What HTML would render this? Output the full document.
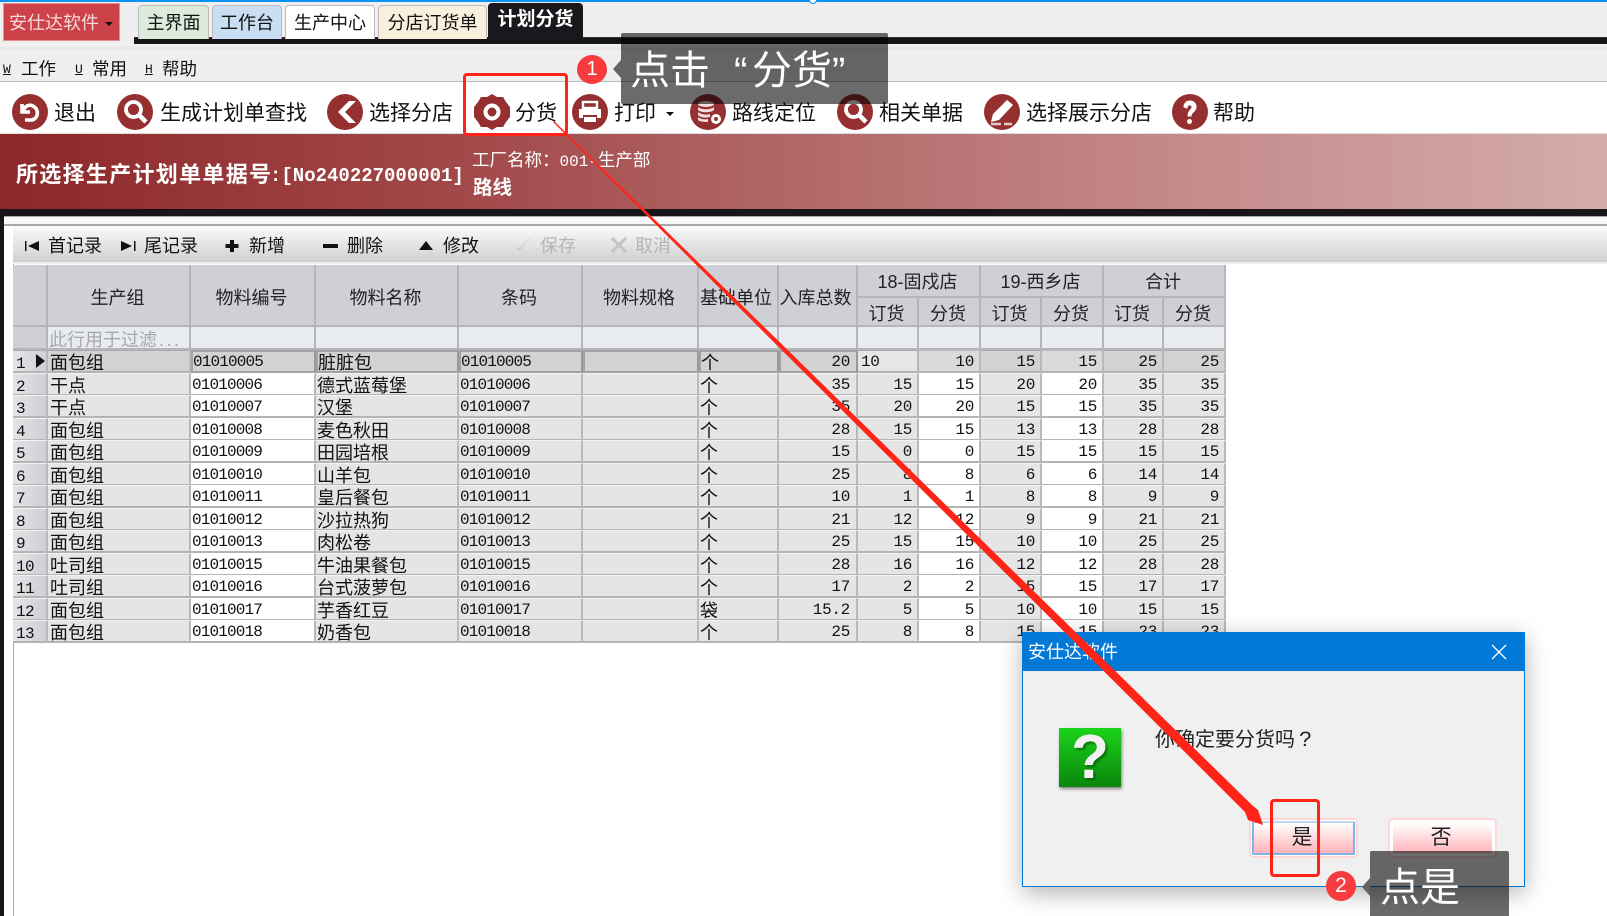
<!DOCTYPE html>
<html lang="zh"><head><meta charset="utf-8"><title>计划分货</title>
<style>
html,body{margin:0;padding:0}
body{width:1607px;height:916px;position:relative;overflow:hidden;background:#fff;font-family:"Liberation Sans","WenQuanYi Zen Hei","Noto Sans CJK SC",sans-serif;color:#111}
div,span,svg{position:absolute;box-sizing:border-box}
.t{white-space:nowrap;line-height:1}
.tab{top:5px;height:34px;border:1px solid #bbb;border-bottom:0;border-radius:4px 4px 0 0;font-size:18px;line-height:35px;text-align:center;white-space:nowrap}
.m{font-size:17.5px;top:61px}
.k{font:13px "Liberation Mono",monospace;top:62px;text-decoration:underline}
.b{font-size:21px;top:103px}
.ic{top:94px;width:36px;height:36px}
.g{font-size:18px;top:237px}
.h{top:265px;height:62px;background:#ced0d5;border-right:2px solid #b4b6ba;border-bottom:2px solid #b4b6ba;font-size:18px;text-align:center;line-height:67px;padding-right:2px;color:#222;white-space:nowrap}
.h2{height:33px;line-height:34px}
.h3{top:298px;height:29px;line-height:32px}
.f{top:327px;height:23px;background:#e8ebf0;border-right:2px solid #b4b6ba;border-bottom:2px solid #b4b6ba}
.r{left:13px;width:1213px;height:23px}
.r span{top:0;height:23px;background:#e5e5e5;border-right:2px solid #b9b9b9;border-bottom:2px solid #b4b4b4;border-top:1px solid #f3f3f3;line-height:24px;white-space:nowrap;font-size:18px;padding-left:3px;overflow:hidden}
.r .n{left:0;width:35px;background:linear-gradient(90deg,#e4e4e6,#cdd0d6);font:16px/26px "Liberation Mono",monospace;letter-spacing:-.6px;padding-left:3px}
.r .a{left:35px;width:143px;padding-left:2px}
.r .c{left:178px;width:125px;background:#fff;font:16px/23px "Liberation Mono",monospace;letter-spacing:-.85px;border-top-color:#fff;padding-left:1px}
.r .d{left:303px;width:143px;padding-left:1px}
.r .e{left:446px;width:124px;font:16px/23px "Liberation Mono",monospace;letter-spacing:-.85px;padding-left:1px}
.r .s{left:570px;width:116px}
.r .u{left:686px;width:80px;padding-left:1px}
.r .q,.r .o1,.r .o2,.r .o3,.r .o4,.r .o5,.r .o6{font:16px/23px "Liberation Mono",monospace;letter-spacing:-.3px;text-align:right;padding:0 5px 0 0}
.r .q{left:766px;width:79px;padding-right:6px}
.r .o1{left:845px;width:61px}
.r .o2{left:906px;width:62px;background:#fff;border-top-color:#fff}
.r .o3{left:968px;width:61px}
.r .o4{left:1029px;width:62px;background:#fff;border-top-color:#fff}
.r .o5{left:1091px;width:60px}
.r .o6{left:1151px;width:62px}
.sel span{background:#d2d2d2;border-top:1px solid #aaa}
.sel .n{background:linear-gradient(90deg,#e4e4e6,#cdd0d6)}
.r.sel .c,.r.sel .d,.r.sel .e,.sel .s,.r.sel .u,.r.sel .q{background:#d2d2d2;border:2px solid #a2a2a2;border-right:2px solid #999;line-height:21px;padding-left:0}
.r.sel .d,.r.sel .u{line-height:22px}
.r.sel .q{padding-right:6px}
.r.sel .o2,.r.sel .o4{background:#dadada;border-top-color:#bbb}
.r.sel .o1{background:#e6e6e6;text-align:left;padding-left:3px}
.rb{border:3px solid #ff2418;border-radius:4px}
.tip{background:rgba(0,0,0,.58)}
.ar{width:0;height:0;border-top:9px solid transparent;border-bottom:9px solid transparent;border-right:8px solid #646464}
.bd{border-radius:50%;background:#f73b3f;color:#fff;text-align:center;font-family:"Liberation Sans",sans-serif}
.btn{border-radius:2px;background:linear-gradient(#fff,#ffb4b9);font-size:21px;text-align:center;line-height:29px;padding-right:3px;color:#222;box-shadow:0 0 0 1px #fff,0 0 0 3px #ffd6d8}
</style></head><body>
<!-- top -->
<div style="left:0;top:0;width:1607px;height:82px;background:#efefef"></div>
<div style="left:0;top:0;width:1607px;height:2px;background:#0a93f5"></div>
<div style="left:809px;top:-4px;width:8px;height:8px;border:1.5px solid #0a93f5;border-radius:50%;background:#fff"></div>
<div style="left:3px;top:3px;width:117px;height:38px;background:#cc4248;border:1px solid #e58f90"></div>
<div class="t" style="left:9px;top:14px;font-size:18px;color:#f7dada">安仕达软件</div>
<div style="left:105px;top:22px;width:0;height:0;border:4px solid transparent;border-top:4px solid #111"></div>
<div style="left:134px;top:37px;width:1473px;height:7px;background:#17151a;border-top:1px solid #333"></div>
<div style="left:0;top:44px;width:1607px;height:6px;background:linear-gradient(#f3f3f3,#e4e4e4)"></div>
<div class="tab" style="left:138px;width:71px;background:#dcebdc">主界面</div>
<div class="tab" style="left:212px;width:70px;background:#c9ddf3">工作台</div>
<div class="tab" style="left:285px;width:90px;background:#fff">生产中心</div>
<div class="tab" style="left:378px;width:109px;background:#f8efdc">分店订货单</div>
<div class="tab" style="left:488px;top:3px;width:95px;height:36px;background:#1a181d;border:0;color:#fff;font-weight:bold;font-size:19px;line-height:33px">计划分货</div>
<!-- menu -->
<div class="k" style="left:3px">W</div><div class="t m" style="left:21px">工作</div>
<div class="k" style="left:75px">U</div><div class="t m" style="left:92px">常用</div>
<div class="k" style="left:145px">H</div><div class="t m" style="left:162px">帮助</div>
<!-- toolbar -->
<div style="left:0;top:81px;width:1607px;height:53px;background:#fff;border-top:1px solid #b9b9b9;border-bottom:1px solid #ddd"></div>

<svg class="ic" style="left:12px" viewBox="0 0 36 36"><circle cx="18" cy="18" r="18" fill="#963030"/><path d="M10 10v8h8M11 17c2-5 6-7 10-5 6 3 6 12-1 14h-7" fill="none" stroke="#fff" stroke-width="3.6"/></svg>
<div class="t b" style="left:54px">退出</div>
<svg class="ic" style="left:117px" viewBox="0 0 36 36"><circle cx="18" cy="18" r="18" fill="#963030"/><circle cx="16.500" cy="15.500" r="7.500" fill="none" stroke="#fff" stroke-width="3.800"/><path d="M22 21l7 7" stroke="#fff" stroke-width="4.500"/></svg>
<div class="t b" style="left:160px">生成计划单查找</div>
<svg class="ic" style="left:327px" viewBox="0 0 36 36"><circle cx="18" cy="18" r="18" fill="#963030"/><path d="M22 7L11 18l11 11h7L18 18 29 7z" fill="#fff"/></svg>
<div class="t b" style="left:369px">选择分店</div>
<svg class="ic" style="left:474px" viewBox="0 0 36 36"><path d="M18 0l5 3 6 0 3 5 4 5v10l-4 5-3 5-6 0-5 3-5-3-6 0-3-5-4-5V13l4-5 3-5 6 0z" fill="#963030"/><circle cx="18" cy="18" r="6.500" fill="none" stroke="#fff" stroke-width="4"/></svg>
<div class="t b" style="left:515px">分货</div>
<svg class="ic" style="left:572px" viewBox="0 0 36 36"><circle cx="18" cy="18" r="18" fill="#963030"/><rect x="11" y="8" width="14" height="6" fill="none" stroke="#fff" stroke-width="2.400"/><path d="M7 15h22v9h-4v-3H11v3H7z" fill="#fff"/><rect x="12" y="23" width="12" height="5" fill="#fff"/></svg>
<div class="t b" style="left:614px">打印</div>
<div style="left:666px;top:112px;width:0;height:0;border:4px solid transparent;border-top:4px solid #111"></div>
<svg class="ic" style="left:690px" viewBox="0 0 36 36"><circle cx="18" cy="18" r="18" fill="#963030"/><ellipse cx="16" cy="10" rx="8" ry="3" fill="#f2dede"/><path d="M8 13c3 3 13 3 16 0v3c-3 3-13 3-16 0zM8 18c3 3 10 3 12 2v3c-3 1-9 1-12-2zM8 23c2 2 7 3 10 2v3c-3 0-8 0-10-2z" fill="#f2dede"/><circle cx="26" cy="25" r="5" fill="#fff"/><circle cx="26" cy="25" r="2" fill="#963030"/></svg>
<div class="t b" style="left:732px">路线定位</div>
<svg class="ic" style="left:837px" viewBox="0 0 36 36"><circle cx="18" cy="18" r="18" fill="#963030"/><circle cx="16.500" cy="15.500" r="7.500" fill="none" stroke="#fff" stroke-width="3.800"/><path d="M22 21l7 7" stroke="#fff" stroke-width="4.500"/></svg>
<div class="t b" style="left:879px">相关单据</div>
<svg class="ic" style="left:984px" viewBox="0 0 36 36"><circle cx="18" cy="18" r="18" fill="#963030"/><path d="M23 6l6 5-14 15-8 2 2-8z" fill="#fff"/><path d="M7 30h10M20 30h8" stroke="#e9c9c9" stroke-width="2.400"/></svg>
<div class="t b" style="left:1026px">选择展示分店</div>
<svg class="ic" style="left:1172px" viewBox="0 0 36 36"><circle cx="18" cy="18" r="18" fill="#963030"/><path d="M12 13c0-8 12-8 12 0 0 5-5 5-5 9h-3c0-6 4-6 4-9 0-3-5-3-5 1z" fill="#fff" stroke="#fff"/><circle cx="17.500" cy="27.500" r="2.500" fill="#fff"/></svg>
<div class="t b" style="left:1213px">帮助</div>

<!-- banner -->
<div style="left:0;top:134px;width:1607px;height:75px;background:linear-gradient(90deg,#8d2729 0%,#a34a4b 30%,#b26868 50%,#c68c8c 75%,#d4abab 100%)"></div>
<div class="t" style="left:16px;top:164px;font-size:22px;font-weight:bold;color:#fff;letter-spacing:1.3px">所选择生产计划单单据号</div>
<div class="t" style="left:270px;top:165px;font:bold 19px 'Liberation Mono',monospace;color:#fff">:[No240227000001]</div>
<div class="t" style="left:472px;top:152px;font-size:17.500px;color:#fff">工厂名称：<span style="position:static;font-family:'Liberation Mono',monospace;font-size:16px">001-</span>生产部</div>
<div class="t" style="left:473px;top:179px;font-size:19.500px;font-weight:bold;color:#fff">路线</div>
<div style="left:0;top:209px;width:1607px;height:7px;background:#17151a"></div>
<div style="left:0;top:216px;width:4px;height:700px;background:#17151a"></div>
<div style="left:4px;top:216px;width:1603px;height:10px;background:#f9f9f9;border-top:1px solid #aaa;border-bottom:2px solid #a8a8a8"></div>
<div style="left:13px;top:226px;width:1px;height:690px;background:#aaa"></div>

<!-- grid toolbar -->
<div style="left:13px;top:226px;width:1594px;height:38px;background:linear-gradient(#fafafa,#d0d0d0);border-bottom:2px solid #eee"></div>
<svg style="left:24px;top:240px;width:16px;height:12px" viewBox="0 0 16 12"><path d="M1 1v10h1.500V1zM15 1v10L4 6z" fill="#111"/></svg>
<div class="t g" style="left:48px">首记录</div>
<svg style="left:120px;top:240px;width:16px;height:12px" viewBox="0 0 16 12"><path d="M1 1v10l11-5zM14 1v10h1.500V1z" fill="#111"/></svg>
<div class="t g" style="left:144px">尾记录</div>
<svg style="left:225px;top:239px;width:14px;height:14px" viewBox="0 0 14 14"><path d="M5 1h4v4h4.500v4H9v4H5V9H.5V5H5z" fill="#111"/></svg>
<div class="t g" style="left:249px">新增</div>
<div style="left:323px;top:244px;width:15px;height:4px;background:#111"></div>
<div class="t g" style="left:347px">删除</div>
<div style="left:419px;top:241px;width:0;height:0;border:7.500px solid transparent;border-top:0;border-bottom:9px solid #111"></div>
<div class="t g" style="left:443px">修改</div>
<svg style="left:513px;top:237px;width:18px;height:16px" viewBox="0 0 18 16"><path d="M1 9l5 6L17 1 6 11z" fill="#c8c8c8" stroke="#ddd"/></svg>
<div class="t g" style="left:540px;color:#b5b5b5">保存</div>
<svg style="left:610px;top:237px;width:18px;height:16px" viewBox="0 0 18 16"><path d="M2 1l14 14M16 1L2 15" stroke="#c4c4c4" stroke-width="3"/></svg>
<div class="t g" style="left:635px;color:#b5b5b5">取消</div>

<!-- grid header -->
<div class="h" style="left:13px;width:35px"></div>
<div class="h" style="left:48px;width:143px">生产组</div>
<div class="h" style="left:191px;width:125px">物料编号</div>
<div class="h" style="left:316px;width:143px">物料名称</div>
<div class="h" style="left:459px;width:124px">条码</div>
<div class="h" style="left:583px;width:116px">物料规格</div>
<div class="h" style="left:699px;width:80px;padding-right:4px">基础单位</div>
<div class="h" style="left:779px;width:79px;padding-right:4px">入库总数</div>
<div class="h h2" style="left:858px;width:123px">18-固戍店</div>
<div class="h h2" style="left:981px;width:123px">19-西乡店</div>
<div class="h h2" style="left:1104px;width:122px">合计</div>
<div class="h h3" style="left:858px;width:61px">订货</div><div class="h h3" style="left:919px;width:62px">分货</div>
<div class="h h3" style="left:981px;width:61px">订货</div><div class="h h3" style="left:1042px;width:62px">分货</div>
<div class="h h3" style="left:1104px;width:60px">订货</div><div class="h h3" style="left:1164px;width:62px">分货</div>
<!-- filter -->
<div class="f" style="left:13px;width:35px;background:#ced0d5"></div>
<div class="f" style="left:48px;width:143px;color:#a8a8a8;font-size:18px;line-height:26px;padding-left:1px;white-space:nowrap">此行用于过滤<span style="position:static;letter-spacing:2.5px;margin-left:2px">...</span></div>
<div class="f" style="left:191px;width:125px"></div><div class="f" style="left:316px;width:143px"></div><div class="f" style="left:459px;width:124px"></div><div class="f" style="left:583px;width:116px"></div><div class="f" style="left:699px;width:80px"></div><div class="f" style="left:779px;width:79px"></div><div class="f" style="left:858px;width:61px"></div><div class="f" style="left:919px;width:62px"></div><div class="f" style="left:981px;width:61px"></div><div class="f" style="left:1042px;width:62px"></div><div class="f" style="left:1104px;width:60px"></div><div class="f" style="left:1164px;width:62px"></div>

<!-- rows -->
<div class="r sel" style="top:350px"><span class="n">1</span><span class="a">面包组</span><span class="c">01010005</span><span class="d">脏脏包</span><span class="e">01010005</span><span class="s"></span><span class="u">个</span><span class="q">20</span><span class="o1">10</span><span class="o2">10</span><span class="o3">15</span><span class="o4">15</span><span class="o5">25</span><span class="o6">25</span></div>
<div style="left:36px;top:354px;width:0;height:0;border-top:7.500px solid transparent;border-bottom:7.500px solid transparent;border-left:9px solid #111"></div>
<div class="r" style="top:373px"><span class="n">2</span><span class="a">干点</span><span class="c">01010006</span><span class="d">德式蓝莓堡</span><span class="e">01010006</span><span class="s"></span><span class="u">个</span><span class="q">35</span><span class="o1">15</span><span class="o2">15</span><span class="o3">20</span><span class="o4">20</span><span class="o5">35</span><span class="o6">35</span></div>
<div class="r" style="top:395px"><span class="n">3</span><span class="a">干点</span><span class="c">01010007</span><span class="d">汉堡</span><span class="e">01010007</span><span class="s"></span><span class="u">个</span><span class="q">35</span><span class="o1">20</span><span class="o2">20</span><span class="o3">15</span><span class="o4">15</span><span class="o5">35</span><span class="o6">35</span></div>
<div class="r" style="top:418px"><span class="n">4</span><span class="a">面包组</span><span class="c">01010008</span><span class="d">麦色秋田</span><span class="e">01010008</span><span class="s"></span><span class="u">个</span><span class="q">28</span><span class="o1">15</span><span class="o2">15</span><span class="o3">13</span><span class="o4">13</span><span class="o5">28</span><span class="o6">28</span></div>
<div class="r" style="top:440px"><span class="n">5</span><span class="a">面包组</span><span class="c">01010009</span><span class="d">田园培根</span><span class="e">01010009</span><span class="s"></span><span class="u">个</span><span class="q">15</span><span class="o1">0</span><span class="o2">0</span><span class="o3">15</span><span class="o4">15</span><span class="o5">15</span><span class="o6">15</span></div>
<div class="r" style="top:463px"><span class="n">6</span><span class="a">面包组</span><span class="c">01010010</span><span class="d">山羊包</span><span class="e">01010010</span><span class="s"></span><span class="u">个</span><span class="q">25</span><span class="o1">8</span><span class="o2">8</span><span class="o3">6</span><span class="o4">6</span><span class="o5">14</span><span class="o6">14</span></div>
<div class="r" style="top:485px"><span class="n">7</span><span class="a">面包组</span><span class="c">01010011</span><span class="d">皇后餐包</span><span class="e">01010011</span><span class="s"></span><span class="u">个</span><span class="q">10</span><span class="o1">1</span><span class="o2">1</span><span class="o3">8</span><span class="o4">8</span><span class="o5">9</span><span class="o6">9</span></div>
<div class="r" style="top:508px"><span class="n">8</span><span class="a">面包组</span><span class="c">01010012</span><span class="d">沙拉热狗</span><span class="e">01010012</span><span class="s"></span><span class="u">个</span><span class="q">21</span><span class="o1">12</span><span class="o2">12</span><span class="o3">9</span><span class="o4">9</span><span class="o5">21</span><span class="o6">21</span></div>
<div class="r" style="top:530px"><span class="n">9</span><span class="a">面包组</span><span class="c">01010013</span><span class="d">肉松卷</span><span class="e">01010013</span><span class="s"></span><span class="u">个</span><span class="q">25</span><span class="o1">15</span><span class="o2">15</span><span class="o3">10</span><span class="o4">10</span><span class="o5">25</span><span class="o6">25</span></div>
<div class="r" style="top:553px"><span class="n">10</span><span class="a">吐司组</span><span class="c">01010015</span><span class="d">牛油果餐包</span><span class="e">01010015</span><span class="s"></span><span class="u">个</span><span class="q">28</span><span class="o1">16</span><span class="o2">16</span><span class="o3">12</span><span class="o4">12</span><span class="o5">28</span><span class="o6">28</span></div>
<div class="r" style="top:575px"><span class="n">11</span><span class="a">吐司组</span><span class="c">01010016</span><span class="d">台式菠萝包</span><span class="e">01010016</span><span class="s"></span><span class="u">个</span><span class="q">17</span><span class="o1">2</span><span class="o2">2</span><span class="o3">15</span><span class="o4">15</span><span class="o5">17</span><span class="o6">17</span></div>
<div class="r" style="top:598px"><span class="n">12</span><span class="a">面包组</span><span class="c">01010017</span><span class="d">芋香红豆</span><span class="e">01010017</span><span class="s"></span><span class="u">袋</span><span class="q">15.2</span><span class="o1">5</span><span class="o2">5</span><span class="o3">10</span><span class="o4">10</span><span class="o5">15</span><span class="o6">15</span></div>
<div class="r" style="top:620px"><span class="n">13</span><span class="a">面包组</span><span class="c">01010018</span><span class="d">奶香包</span><span class="e">01010018</span><span class="s"></span><span class="u">个</span><span class="q">25</span><span class="o1">8</span><span class="o2">8</span><span class="o3">15</span><span class="o4">15</span><span class="o5">23</span><span class="o6">23</span></div>

<!-- dialog -->
<div style="left:1022px;top:632px;width:503px;height:255px;background:#f0f0f0;border:1px solid #0278d7;box-shadow:0 6px 22px rgba(0,0,0,.3)"></div>
<div style="left:1022px;top:632px;width:503px;height:39px;background:#0278d7"></div>
<div class="t" style="left:1028px;top:643px;font-size:18px;color:#fff">安仕达软件</div>
<svg style="left:1491px;top:644px;width:16px;height:16px" viewBox="0 0 16 16"><path d="M1 1l14 14M15 1L1 15" stroke="#fff" stroke-width="1.300"/></svg>
<div style="left:1059px;top:728px;width:62px;height:59px;background:linear-gradient(#1bd31b,#0b860b);box-shadow:1px 2px 3px rgba(0,0,0,.45);text-align:center;color:#f2f2f2;font:bold 62px/59px 'Liberation Sans',sans-serif;text-shadow:2px 2px 2px rgba(0,70,0,.6)">?</div>
<div class="t" style="left:1155px;top:730px;font-size:20px;color:#222">你确定要分货吗<span style="position:static;font-family:'Liberation Mono',monospace;font-size:22px;margin-left:4px">?</span></div>
<div class="btn" style="left:1252px;top:821px;width:103px;height:34px;border:2px solid #7fb4ea;border-top-color:#bcd6f0">是</div>
<div class="btn" style="left:1391px;top:821px;width:103px;height:34px;border:2px solid #fff">否</div>

<!-- annotations -->
<svg style="left:0;top:0;width:1607px;height:916px" viewBox="0 0 1607 916"><polygon points="553,122 555,122 1252,805 1258,810 1263,825 1248,820 1245,812" fill="#ff2418"/></svg>
<div class="rb" style="left:1270px;top:799px;width:50px;height:78px"></div>
<div class="rb" style="left:463px;top:73px;width:105px;height:63px"></div>
<div class="bd" style="left:577px;top:55px;width:30px;height:29px;font-size:20px;line-height:29px">1</div>
<div class="ar" style="left:613px;top:60px"></div>
<div class="tip" style="left:621px;top:33px;width:267px;height:71px;border-radius:2px"></div>
<div class="t" style="left:630px;top:51px;font-size:40px;color:#fff">点击</div>
<div class="t" style="left:734px;top:52px;font-size:40px;color:#fff">“</div>
<div class="t" style="left:752px;top:51px;font-size:40px;color:#fff">分货</div>
<div class="t" style="left:832px;top:52px;font-size:40px;color:#fff">”</div>
<div class="bd" style="left:1326px;top:871px;width:30px;height:30px;font-size:21px;line-height:30px">2</div>
<div class="ar" style="left:1362px;top:878px"></div>
<div class="tip" style="left:1370px;top:851px;width:139px;height:65px;border-radius:2px 2px 0 0"></div>
<div class="t" style="left:1380px;top:868px;font-size:40px;color:#fff">点是</div>
</body></html>
